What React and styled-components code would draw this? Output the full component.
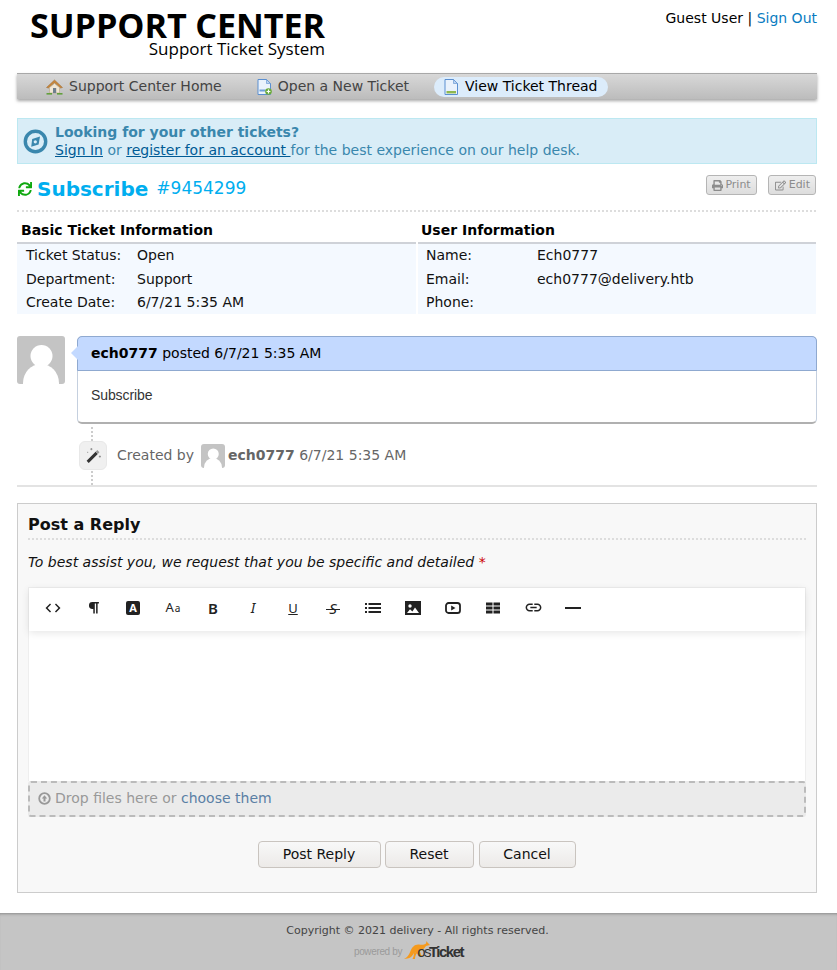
import React from "react";
import styled, { createGlobalStyle } from "styled-components";
import { FaSync, FaPrint, FaRegEdit } from "react-icons/fa";
import { MdCode, MdLink } from "react-icons/md";

const Global = createGlobalStyle`
  html, body { margin: 0; padding: 0; background: #fff; }
  body { font-family: "DejaVu Sans", sans-serif; font-size: 14px; color: #000; line-height: 1.2; }
  * { box-sizing: border-box; }
  a { color: inherit; }
`;

const Page = styled.div`display: flex; flex-direction: column; height: 970px; overflow: hidden;`;
const Container = styled.div`width: 800px; margin-left: 17px; flex: 1;`;
const Header = styled.header`height: 73px; display: flex; justify-content: space-between; align-items: flex-start;`;
const Logo = styled.div`display: flex; flex-direction: column; align-items: flex-end; width: 308px; padding-top: 9px;`;
const LogoMain = styled.div`font-family: "Open Sans", sans-serif; font-weight: 700; font-size: 34.2px; line-height: 32px; letter-spacing: -0.1px; color: #000; white-space: nowrap;`;
const LogoSub = styled.div`font-family: "Open Sans", sans-serif; font-size: 17px; line-height: 16px; color: #000; white-space: nowrap;`;
const UserBox = styled.div`padding-top: 10px; line-height: 17px; color: #000; white-space: nowrap;`;
const SignOut = styled.a`color: #0a7cc1; text-decoration: none;`;

const Nav = styled.nav`height: 26px; border-top: 1px solid #a8a8a8; background: linear-gradient(#d8d8d8, #bcbcbc); box-shadow: 0 2px 3px rgba(0,0,0,.35); display: flex; align-items: center; padding-left: 23px; gap: 19px;`;
const NavItem = styled.a`display: flex; align-items: center; gap: 6px; height: 20px; padding: 0 10px 0 ${p => (p.$active ? 10 : 6)}px; margin-left: ${p => (p.$active ? -4 : 0)}px; border-radius: 10px; color: ${p => (p.$active ? "#000" : "#444")}; background: ${p => (p.$active ? "#dcecfb" : "transparent")}; white-space: nowrap;`;

const Banner = styled.div`margin-top: 19px; height: 46px; background: #d9edf7; border: 1px solid #bce8f1; color: #3a87ad; display: flex; align-items: center; padding-left: 5px; gap: 7px; line-height: 18px;`;
const BannerLink = styled.a`color: #005b95; text-decoration: underline;`;
const BannerTitle = styled.div`font-weight: 700;`;

const TitleRow = styled.div`margin-top: 11px; height: 37px; border-bottom: 2px dotted #ddd; display: flex; justify-content: space-between; align-items: flex-start; margin-right: 1px;`;
const Title = styled.div`display: flex; align-items: center; height: 27px; gap: 5px; color: #00aeef;`;
const TitleText = styled.span`font-size: 20px; font-weight: 700;`;
const TicketNo = styled.span`font-size: 17px; margin-left: 3px;`;
const Actions = styled.div`display: flex; gap: 11px;`;
const ActionBtn = styled.a`display: flex; align-items: center; gap: ${p => p.$gap}px; height: 20px; padding: 0 5px 0 ${p => p.$pl}px; border: 1px solid #b5b5b5; border-radius: 3px; background: linear-gradient(#eee, #ddd); color: #8c8c8c; font-size: 11px;`;

const InfoGrid = styled.div`display: grid; grid-template-columns: 399px 398px; gap: 0 2px; margin-top: 9px;`;
const InfoTitle = styled.div`font-weight: 700; height: 23px; padding-left: ${p => p.$pl}px; border-bottom: 2px solid #cfd2d8; line-height: 18px;`;
const InfoBody = styled.div`background: #f4f9ff; height: 70px; padding: 2px 0 0 ${p => p.$pl}px;`;
const InfoRow = styled.div`display: flex; height: ${p => p.$h}px; line-height: 19px; color: #111;`;
const InfoLabel = styled.div`width: 111px; flex: none;`;

const Thread = styled.div`margin-top: 22px; display: flex; gap: 12px;`;
const AvatarBox = styled.div`width: ${p => p.$s}px; height: ${p => p.$s}px; flex: none; border-radius: 3px; overflow: hidden; background: #c4c4c4;`;
const Bubble = styled.div`position: relative; flex: 1; border: 1px solid #c5d0df; border-bottom: 2px solid #b0b0b0; border-radius: 5px; height: 88px; background: #fff;`;
const BubbleHead = styled.div`height: 35px; margin: -1px -1px 0; background: #c3d9ff; border: 1px solid #8fa9d0; border-radius: 5px 5px 0 0; padding-left: 13px; line-height: 33px; white-space: nowrap;`;
const Tail = styled.div`position: absolute; left: -7px; top: 9px; width: 0; height: 0; border-top: 7px solid transparent; border-bottom: 7px solid transparent; border-right: 7px solid #c3d9ff;`;
const BubbleBody = styled.div`padding: 16px 13px; font-family: "Liberation Sans", sans-serif; font-size: 14px; line-height: 17px; color: #333; letter-spacing: -.1px;`;

const EventWrap = styled.div`margin-left: 75px; height: 61px; position: relative; display: flex; align-items: center; color: #666;`;
const Dots = styled.div`position: absolute; left: -1px; top: 3px; bottom: 0; width: 0; border-left: 2px dotted #ccc;`;
const EventIcon = styled.div`position: relative; width: 28px; height: 29px; margin-left: -13px; background: #f0f0f0; border: 1px solid #e8e8e8; border-radius: 6px; display: flex; align-items: center; justify-content: center; margin-top: 1px;`;
const EventText = styled.div`display: flex; align-items: center; margin-left: 10px; gap: 3px; white-space: nowrap; margin-top: 2px;`;
const CreatedBy = styled.span`margin-right: 4px;`;
const Rule = styled.div`height: 2px; background: #e3e3e3;`;

const ReplyBox = styled.form`margin-top: 16px; height: 390px; background: #f8f8f8; border: 1px solid #ccc; padding: 10px;`;
const ReplyTitle = styled.div`font-size: 16px; font-weight: 700; height: 26px; border-bottom: 2px dotted #ddd; line-height: 22px; color: #111;`;
const ReplyHint = styled.div`margin-top: 14px; font-style: italic; line-height: 17px; color: #111;`;
const Req = styled.span`color: #c00;`;

const Editor = styled.div`margin-top: 16px; background: #fff; height: 194px; border: 1px solid #eee; border-bottom: 0;`;
const Toolbar = styled.div`height: 43px; padding: 0 0 4px 4px; background: #fff; box-shadow: 0 2px 8px rgba(0,0,0,.10); display: flex; align-items: center; color: #222;`;
const Tool = styled.div`width: 40px; height: 16px; flex: none; display: flex; align-items: center; justify-content: center; font-family: "Noto Sans", sans-serif; color: #222; line-height: 16px;`;
const ToolBadge = styled.span`width: 14px; height: 14px; border-radius: 2px; background: #222; color: #fff; font-size: 11px; font-weight: 700; display: flex; align-items: center; justify-content: center;`;
const ToolText = styled.span`font-size: ${p => p.$s}px; font-weight: ${p => p.$w || 400}; font-style: ${p => (p.$i ? "italic" : "normal")}; text-decoration: ${p => p.$d || "none"};`;
const ToolSmall = styled.span`font-size: 10px; margin-left: 1px;`;
const HrBar = styled.span`display: block; width: 16px; height: 2px; background: #222;`;
const Strike = styled.span`
  position: relative; font-size: 15px; font-style: italic;
  &::after { content: ""; position: absolute; left: -3px; right: -3px; top: 9px; height: 1px; background: #222; }
`;

const Drop = styled.div`height: 36px; padding: 0 0 1px 8px; background: #ebebeb; border: 2px dashed #bbb; border-radius: 3px; color: #999; display: flex; align-items: center; gap: 4px;`;
const ChooseLink = styled.a`color: #5a7fa5;`;

const Buttons = styled.div`margin-top: 24px; display: flex; justify-content: center; gap: 4px; padding-right: 1px;`;
const Btn = styled.button`height: 27px; width: ${p => p.$w}px; margin-left: ${p => p.$ml || 0}px; padding: 0 0 2px; font-family: "DejaVu Sans", sans-serif; font-size: 14px; color: #111; background: linear-gradient(#f8f8f8, #eceae8); border: 1px solid #c9c4bf; border-radius: 4px;`;

const Footer = styled.footer`height: 57px; background: #c5c5c5; box-shadow: inset 0 3px 3px -2px rgba(0,0,0,.3); display: flex; flex-direction: column; align-items: center; padding-top: 11px; flex: none;`;
const Copy = styled.div`font-size: 11px; line-height: 14px; color: #444; margin-right: 2px;`;
const Powered = styled.div`display: flex; align-items: flex-end; height: 22px; margin-right: 20px;`;
const PoweredBy = styled.span`font-family: "Liberation Sans", sans-serif; font-size: 10px; letter-spacing: -.35px; color: #9a9a9a; margin-right: 2px; line-height: 16px;`;
const OsText = styled.span`font-family: "Liberation Sans", sans-serif; font-size: 15px; letter-spacing: -1.5px; color: #333; line-height: 17px; margin-left: -13px; font-weight: 700;`;
const OsThin = styled.span`font-weight: 400; margin-right: -1px;`;

const Avatar = ({ s }) => (
  <AvatarBox $s={s}>
    <svg width={s} height={s} viewBox="0 0 48 48">
      <circle cx="24.5" cy="20" r="11" fill="#fff" />
      <ellipse cx="24" cy="47" rx="18" ry="19" fill="#fff" />
    </svg>
  </AvatarBox>
);

const HomeIcon = () => (
  <svg width="17" height="16" viewBox="0 0 17 16">
    <path d="M8.5 1 L16.5 8.5 L14.5 9 L8.5 3.8 L2.5 9 L.5 8.5Z" fill="#c8873c" stroke="#9a6a30" strokeWidth=".5" />
    <path d="M3.5 8.5 L8.5 4.5 L13.5 8.5 V14 H3.5Z" fill="#f0e6d4" stroke="#b9a684" strokeWidth=".6" />
    <rect x="7" y="9" width="3.2" height="5" fill="#6f7f8e" />
    <rect x=".5" y="14" width="5.5" height="1.6" fill="#62a03c" />
    <rect x="11" y="14" width="5.5" height="1.6" fill="#62a03c" />
  </svg>
);
const DocIcon = ({ plus }) => (
  <svg width="15" height="16" viewBox="0 0 15 16">
    <path d="M1 .5 H9.5 L13.5 4.5 V15.5 H1Z" fill="#eaf2fc" stroke="#5b8fd0" />
    <path d="M9.5 .5 V4.5 H13.5Z" fill="#bcd3ef" stroke="#5b8fd0" strokeWidth=".6" />
    {plus ? (
      <>
        <rect x="2.5" y="10.5" width="6" height="2" fill="#6ea0d8" />
        <circle cx="11.5" cy="12.5" r="3.3" fill="#6aaa3a" />
        <path d="M11.5 10.6 V14.4 M9.6 12.5 H13.4" stroke="#fff" strokeWidth="1.2" />
      </>
    ) : (
      <rect x="2.5" y="12" width="9.5" height="2.4" fill="#8fb84e" />
    )}
  </svg>
);
const Compass = () => (
  <svg width="25" height="25" viewBox="0 0 25 25">
    <circle cx="12.5" cy="12.5" r="10.2" fill="none" stroke="#3a87ad" strokeWidth="3.4" />
    <path d="M17 7.5 L15.6 15.5 L8.2 17.8 L9.2 10Z" fill="#3a87ad" />
    <circle cx="12.3" cy="12.8" r="1.6" fill="#d9edf7" />
  </svg>
);
const Paragraph = () => (
  <svg width="13" height="13" viewBox="0 0 12 12">
    <path d="M5 1 H11 V2.4 H9.8 V11.5 H8.4 V2.4 H7.2 V11.5 H5.8 V7.4 H5 A3.2 3.2 0 0 1 5 1Z" fill="#222" />
  </svg>
);
const UploadCircle = () => (
  <svg width="13" height="13" viewBox="0 0 13 13">
    <circle cx="6.5" cy="6.5" r="5.3" fill="none" stroke="#999" strokeWidth="1.8" />
    <path d="M6.5 3.2 L9.2 6.4 H7.5 V9.5 H5.5 V6.4 H3.8Z" fill="#999" />
  </svg>
);
const ListIcon = () => (
  <svg width="16" height="12" viewBox="0 0 16 12" fill="#222">
    <rect x="0" y="1" width="2" height="2" />
    <rect x="0" y="5" width="2" height="2" />
    <rect x="0" y="9" width="2" height="2" />
    <rect x="3.5" y="1" width="12.5" height="2" />
    <rect x="3.5" y="5" width="12.5" height="2" />
    <rect x="3.5" y="9" width="12.5" height="2" />
  </svg>
);
const ImageIcon = () => (
  <svg width="16" height="14" viewBox="0 0 16 14">
    <rect width="16" height="14" fill="#222" />
    <circle cx="5" cy="5" r="1.7" fill="#fff" />
    <path d="M2 12 L5 8.2 L7.4 10.5 L10 6.6 L14 12Z" fill="#fff" />
  </svg>
);
const VideoIcon = () => (
  <svg width="16" height="12" viewBox="0 0 16 12">
    <rect x="1" y="1" width="14" height="10" rx="2.6" fill="none" stroke="#222" strokeWidth="1.8" />
    <path d="M6.2 3.5 L10.5 6 L6.2 8.5Z" fill="#222" />
  </svg>
);
const TableIcon = () => (
  <svg width="14" height="12" viewBox="0 0 14 12">
    <path d="M0 .5 H6.5 V3.5 H0Z M7.5 .5 H14 V3.5 H7.5Z M0 4.5 H6.5 V7.5 H0Z M7.5 4.5 H14 V7.5 H7.5Z M0 8.5 H6.5 V11.5 H0Z M7.5 8.5 H14 V11.5 H7.5Z" fill="#222" />
  </svg>
);
const WandIcon = () => (
  <svg width="17" height="17" viewBox="0 0 16 16">
    <path d="M1.5 13 L10 4.5 L12 6.5 L3.5 15Z" fill="#333" />
    <path d="M10 4.5 L11.6 2.9 L13.6 4.9 L12 6.5Z" fill="#999" />
    <path d="M5 2 H7 M6 1 V3 M13 9 H15 M14 8 V10 M2 5 H3" stroke="#888" strokeWidth=".8" />
  </svg>
);
const Roo = () => (
  <svg width="26" height="20" viewBox="0 0 26 20">
    <path d="M0 18.5 C3 18 5 15 6.5 11 C8 7 11 4 15 4.5 C18 5 20 5 22 3.5 L22.5 1 L23.5 2.5 L26 5 L22 6 C20 9 18 10.5 15.5 11 C16.5 12.5 17 14 17 15 L20 16 L14.5 16 C14 14 12.5 12.5 10.5 12.5 C9 14 8.5 16 7 17 C5 18.5 2.5 19 0 18.5Z" fill="#f59a1e" />
    <path d="M10 12 C10 15 9.5 17 8.5 19 L11 19 C11 16 12 14.5 13 13Z" fill="#f59a1e" />
  </svg>
);

export default function App() {
  return (
    <Page>
      <Global />
      <Container>
        <Header>
          <Logo>
            <LogoMain>SUPPORT CENTER</LogoMain>
            <LogoSub>Support Ticket System</LogoSub>
          </Logo>
          <UserBox>Guest User | <SignOut href="#">Sign Out</SignOut></UserBox>
        </Header>
        <Nav>
          <NavItem><HomeIcon />Support Center Home</NavItem>
          <NavItem><DocIcon plus />Open a New Ticket</NavItem>
          <NavItem $active><DocIcon />View Ticket Thread</NavItem>
        </Nav>
        <Banner>
          <Compass />
          <div>
            <BannerTitle>Looking for your other tickets?</BannerTitle>
            <BannerLink href="#">Sign In</BannerLink> or <BannerLink href="#">register for an account </BannerLink>for the best experience on our help desk.
          </div>
        </Banner>
        <TitleRow>
          <Title>
            <FaSync size={14} color="#0fa80f" style={{ marginLeft: 1 }} />
            <TitleText>Subscribe</TitleText>
            <TicketNo>#9454299</TicketNo>
          </Title>
          <Actions>
            <ActionBtn $gap={2} $pl={5}><FaPrint size={11} />Print</ActionBtn>
            <ActionBtn $gap={3} $pl={6}><FaRegEdit size={11} />Edit</ActionBtn>
          </Actions>
        </TitleRow>
        <InfoGrid>
          <div>
            <InfoTitle $pl={4}>Basic Ticket Information</InfoTitle>
            <InfoBody $pl={9}>
              <InfoRow $h={24}><InfoLabel>Ticket Status:</InfoLabel>Open</InfoRow>
              <InfoRow $h={23}><InfoLabel>Department:</InfoLabel>Support</InfoRow>
              <InfoRow $h={21}><InfoLabel>Create Date:</InfoLabel>6/7/21 5:35 AM</InfoRow>
            </InfoBody>
          </div>
          <div>
            <InfoTitle $pl={3}>User Information</InfoTitle>
            <InfoBody $pl={8}>
              <InfoRow $h={24}><InfoLabel>Name:</InfoLabel>Ech0777</InfoRow>
              <InfoRow $h={23}><InfoLabel>Email:</InfoLabel>ech0777@delivery.htb</InfoRow>
              <InfoRow $h={21}><InfoLabel>Phone:</InfoLabel></InfoRow>
            </InfoBody>
          </div>
        </InfoGrid>
        <Thread>
          <Avatar s={48} />
          <Bubble>
            <Tail />
            <BubbleHead><b>ech0777</b> posted 6/7/21 5:35 AM</BubbleHead>
            <BubbleBody>Subscribe</BubbleBody>
          </Bubble>
        </Thread>
        <EventWrap>
          <Dots />
          <EventIcon><WandIcon /></EventIcon>
          <EventText>
            <CreatedBy>Created by</CreatedBy>
            <Avatar s={24} />
            <span><b>ech0777</b> 6/7/21 5:35 AM</span>
          </EventText>
        </EventWrap>
        <Rule />
        <ReplyBox>
          <ReplyTitle>Post a Reply</ReplyTitle>
          <ReplyHint>To best assist you, we request that you be specific and detailed <Req>*</Req></ReplyHint>
          <Editor>
            <Toolbar>
              <Tool><MdCode size={18} /></Tool>
              <Tool><Paragraph /></Tool>
              <Tool><ToolBadge>A</ToolBadge></Tool>
              <Tool><ToolText $s={13}>A<ToolSmall>a</ToolSmall></ToolText></Tool>
              <Tool><ToolText $s={15} $w={600}>B</ToolText></Tool>
              <Tool><ToolText $s={14} $i>I</ToolText></Tool>
              <Tool><ToolText $s={13} $d="underline">U</ToolText></Tool>
              <Tool><Strike>S</Strike></Tool>
              <Tool><ListIcon /></Tool>
              <Tool><ImageIcon /></Tool>
              <Tool><VideoIcon /></Tool>
              <Tool><TableIcon /></Tool>
              <Tool><MdLink size={19} /></Tool>
              <Tool><HrBar /></Tool>
            </Toolbar>
          </Editor>
          <Drop>
            <UploadCircle />
            <span>Drop files here or <ChooseLink>choose them</ChooseLink></span>
          </Drop>
          <Buttons>
            <Btn type="button" $w={123}>Post Reply</Btn>
            <Btn type="button" $w={89}>Reset</Btn>
            <Btn type="button" $w={97} $ml={1}>Cancel</Btn>
          </Buttons>
        </ReplyBox>
      </Container>
      <Footer>
        <Copy>Copyright © 2021 delivery - All rights reserved.</Copy>
        <Powered>
          <PoweredBy>powered by</PoweredBy>
          <Roo />
          <OsText><OsThin>os</OsThin>Ticket</OsText>
        </Powered>
      </Footer>
    </Page>
  );
}
